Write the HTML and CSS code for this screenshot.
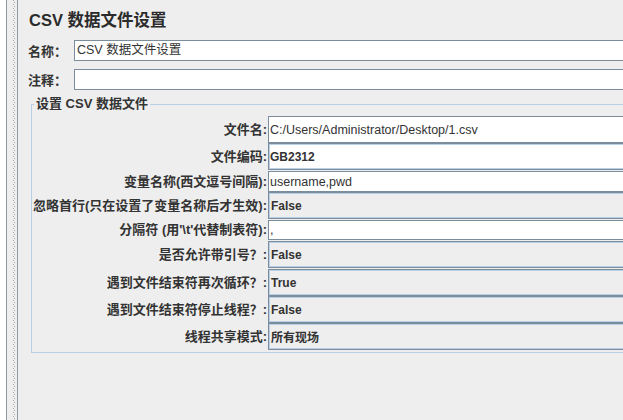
FILE: index.html
```html
<!DOCTYPE html>
<html lang="zh-CN">
<head>
<meta charset="utf-8">
<title>CSV 数据文件设置</title>
<link rel="stylesheet" href="styles.css">
</head>
<body>
<div class="shell">
  <div class="tree"></div>
  <div class="splitter"><div class="dots"></div></div>
  <div class="main">
    <div class="panel">
      <h1 class="title">CSV 数据文件设置</h1>
      <div class="name-row">
        <span class="name-label">名称：</span>
        <div class="input">CSV 数据文件设置</div>
      </div>
      <div class="name-row gap8">
        <span class="name-label">注释：</span>
        <div class="input"></div>
      </div>
      <fieldset class="group">
        <legend class="legend">设置 CSV 数据文件</legend>
        <div class="rows">
          <div class="row h27">
            <span class="label">文件名:</span>
            <div class="field text">C:/Users/Administrator/Desktop/1.csv</div>
          </div>
          <div class="row h27 sep">
            <span class="label">文件编码:</span>
            <div class="field text inner bold">GB2312</div>
          </div>
          <div class="row h21">
            <span class="label">变量名称(西文逗号间隔):</span>
            <div class="field text">username,pwd</div>
          </div>
          <div class="row h27 sep">
            <span class="label">忽略首行(只在设置了变量名称后才生效):</span>
            <div class="field combo bold">False</div>
          </div>
          <div class="row h20 sep">
            <span class="label">分隔符 (用'\t'代替制表符):</span>
            <div class="field text">,</div>
          </div>
          <div class="row h27 sep">
            <span class="label">是否允许带引号？:</span>
            <div class="field combo bold">False</div>
          </div>
          <div class="row h27">
            <span class="label">遇到文件结束符再次循环？:</span>
            <div class="field combo bold">True</div>
          </div>
          <div class="row h27">
            <span class="label">遇到文件结束符停止线程？:</span>
            <div class="field combo bold">False</div>
          </div>
          <div class="row h27">
            <span class="label">线程共享模式:</span>
            <div class="field combo bold">所有现场</div>
          </div>
        </div>
      </fieldset>
    </div>
  </div>
</div>
</body>
</html>
```

FILE: styles.css
```css
* { box-sizing: border-box; }
html, body {
  margin: 0;
  padding: 0;
  background: #eeeeee;
}
body {
  font-family: "Liberation Sans", "Noto Sans CJK SC", sans-serif;
  color: #333333;
  overflow: hidden;
}
.shell {
  display: flex;
  width: 623px;
  height: 420px;
  overflow: hidden;
}
.tree {
  width: 6px;
  flex: none;
  background: #ffffff;
}
.splitter {
  flex: none;
  width: 12px;
  border-left: 1px solid #8e99a3;
  border-right: 1px solid #8e99a3;
  padding-left: 6px;
  display: flex;
}
.dots {
  width: 2px;
  background-image:
    linear-gradient(#a3acb5, #a3acb5),
    linear-gradient(#a3acb5, #a3acb5);
  background-size: 1px 1px, 1px 1px;
  background-repeat: repeat-y, repeat-y;
  background-position: 0 0, 1px 2px;
}
.dots {
  background-image:
    repeating-linear-gradient(to bottom, #a3acb5 0 1px, transparent 1px 4px),
    repeating-linear-gradient(to bottom, transparent 0 2px, #a3acb5 2px 3px, transparent 3px 4px);
  background-size: 1px 100%, 1px 100%;
  background-repeat: no-repeat, no-repeat;
  background-position: 0 0, 1px 0;
}
.main {
  flex: 1;
  min-width: 0;
  overflow: hidden;
  padding-left: 10px;
}
.panel {
  margin-right: -30px;
}
.title {
  margin: 0 0 0 1px;
  padding-top: 8px;
  height: 32px;
  font-size: 16.5px;
  line-height: 24px;
  font-weight: bold;
  color: #2b2b2b;
}
.name-row {
  display: flex;
  align-items: center;
  height: 21px;
  margin-top: 8px;
}
.name-label {
  width: 46px;
  flex: none;
  font-size: 13px;
  font-weight: bold;
  white-space: nowrap;
}
.input {
  flex: 1;
  height: 21px;
  background: #ffffff;
  border: 1px solid #7b8c9c;
  font-size: 12.5px;
  line-height: 19px;
  padding-left: 2px;
  white-space: nowrap;
}
.group {
  margin: 6px 0 0 3px;
  min-width: 0;
  padding: 4px 0 2px 0;
  border: 1px solid #b8cfe5;
}
.legend {
  margin-left: 2px;
  padding: 0 2px;
  font-size: 13px;
  line-height: 16px;
  font-weight: bold;
}
.rows {
  display: flex;
  flex-direction: column;
}
.row {
  display: flex;
  align-items: center;
}
.row.sep { margin-bottom: 1px; }
.h27 { height: 27px; }
.h21 { height: 21px; }
.h20 { height: 20px; }
.label {
  width: 236px;
  flex: none;
  text-align: right;
  padding-right: 1px;
  font-size: 13px;
  font-weight: bold;
  white-space: nowrap;
  line-height: 16px;
}
.field {
  flex: 1;
  height: 100%;
  border: 1px solid #7b8c9c;
  display: flex;
  align-items: center;
  padding-left: 1px;
  font-size: 12.5px;
  white-space: nowrap;
}
.field.text { background: #ffffff; }
.field.combo {
  background: #eeeeee;
  box-shadow: inset 0 0 0 1px #b8cfe5;
  padding-left: 2px;
}
.field.inner {
  box-shadow: inset 0 0 0 1px #b8cfe5;
  padding-left: 1px;
}
.bold {
  font-weight: bold;
  font-size: 12px;
}
```
